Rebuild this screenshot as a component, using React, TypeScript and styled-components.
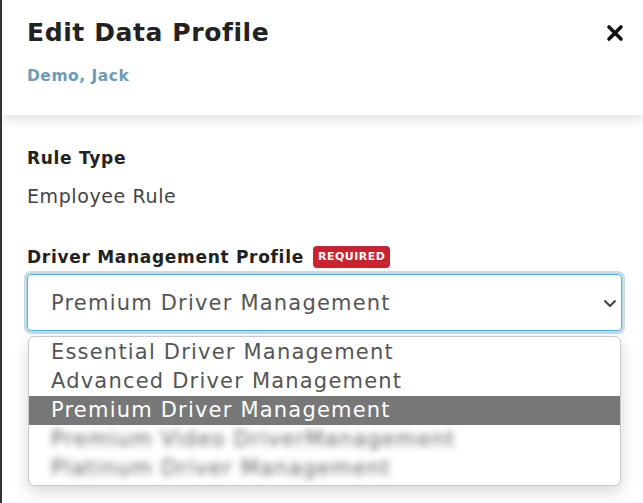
import React from "react";
import styled, { createGlobalStyle } from "styled-components";

const GlobalStyle = createGlobalStyle`
    html, body {
        margin: 0;
        padding: 0;
        background: #ffffff;
    }
    body {
        font-family: "DejaVu Sans", "Liberation Sans", sans-serif;
        color: #333;
    }
`;

const Panel = styled.div`
    min-height: 503px;
    border-left: 2px solid #333;
    background: #fff;
    box-sizing: border-box;
    overflow: hidden;
`;

const Header = styled.header`
    position: relative;
    z-index: 1;
    display: flex;
    justify-content: space-between;
    align-items: flex-start;
    height: 115px;
    padding: 0 19px 0 25px;
    box-sizing: border-box;
    background: #fff;
    box-shadow: 0 5px 10px rgba(0, 0, 0, 0.11);
`;

const TitleBlock = styled.div`
    display: flex;
    flex-direction: column;
    padding-top: 18px;
`;

const Title = styled.h1`
    margin: 0;
    font-size: 25px;
    line-height: 30px;
    font-weight: 700;
    letter-spacing: 0.6px;
    color: #222;
`;

const Subtitle = styled.div`
    margin-top: 19px;
    font-size: 15.5px;
    font-weight: 700;
    letter-spacing: 0.5px;
    color: #6c9db8;
`;

const CloseButton = styled.button`
    margin-top: 24px;
    padding: 0;
    border: 0;
    background: none;
    width: 18px;
    height: 18px;
    cursor: pointer;
    svg {
        display: block;
    }
`;

const Body = styled.div`
    padding: 32px 21px 0 25px;
`;

const Field = styled.div<{ gap?: number }>`
    margin-bottom: ${({ gap }) => gap ?? 0}px;
`;

const Label = styled.div`
    display: flex;
    align-items: center;
    gap: 9px;
    font-size: 17px;
    line-height: 22px;
    font-weight: 700;
    letter-spacing: 0.7px;
    color: #222;
`;

const Value = styled.div`
    margin-top: 15px;
    font-size: 19px;
    line-height: 24px;
    letter-spacing: 0.6px;
    color: #444;
`;

const Badge = styled.span`
    display: inline-flex;
    align-items: center;
    height: 22px;
    padding: 0 5px;
    border-radius: 4px;
    background: #c8232f;
    color: #fff;
    font-size: 11px;
    font-weight: 700;
    letter-spacing: 0.5px;
`;

const SelectWrap = styled.div`
    position: relative;
    margin-top: 6px;
`;

const SelectBox = styled.div`
    display: flex;
    align-items: center;
    justify-content: space-between;
    height: 57px;
    padding: 0 3px 0 23px;
    box-sizing: border-box;
    border: 1px solid #4db2e0;
    border-radius: 4px;
    box-shadow: 0 0 0 3px #c6dce6;
    font-size: 21px;
    letter-spacing: 1.2px;
    color: #555;
`;

const Menu = styled.ul`
    position: absolute;
    top: 62px;
    left: 1px;
    right: 1px;
    margin: 0;
    padding: 1px 0 2px;
    list-style: none;
    background: #fff;
    border: 1px solid #c9c9c9;
    border-radius: 6px;
    box-shadow: 0 6px 16px rgba(0, 0, 0, 0.16);
    overflow: hidden;
`;

const Option = styled.li<{ selected?: boolean; blurred?: boolean }>`
    height: 29px;
    line-height: 29px;
    padding-left: 22px;
    font-size: 21px;
    letter-spacing: 1.2px;
    white-space: nowrap;
    color: ${({ selected, blurred }) => (selected ? "#fff" : blurred ? "#2a2a2a" : "#555")};
    background: ${({ selected }) => (selected ? "#777" : "transparent")};
    filter: ${({ blurred }) => (blurred ? "blur(3.5px)" : "none")};
    opacity: ${({ blurred }) => (blurred ? 0.75 : 1)};
`;

const options = [
    { label: "Essential Driver Management" },
    { label: "Advanced Driver Management" },
    { label: "Premium Driver Management", selected: true },
    { label: "Premium Video DriverManagement", blurred: true },
    { label: "Platinum Driver Management", blurred: true },
];

const App: React.FC = () => {
    return (
        <>
            <GlobalStyle />
            <Panel>
                <Header>
                    <TitleBlock>
                        <Title>Edit Data Profile</Title>
                        <Subtitle>Demo, Jack</Subtitle>
                    </TitleBlock>
                    <CloseButton aria-label="Close">
                        <svg width="18" height="18" viewBox="0 0 18 18">
                            <path d="M3 3 L15 15 M15 3 L3 15" stroke="#111" strokeWidth="3.6" strokeLinecap="round" />
                        </svg>
                    </CloseButton>
                </Header>

                <Body>
                    <Field gap={38}>
                        <Label>Rule Type</Label>
                        <Value>Employee Rule</Value>
                    </Field>

                    <Field>
                        <Label>
                            Driver Management Profile
                            <Badge>REQUIRED</Badge>
                        </Label>
                        <SelectWrap>
                            <SelectBox>
                                <span>Premium Driver Management</span>
                                <svg width="16" height="12" viewBox="0 0 16 12">
                                    <path d="M2.5 3.5 L8 9 L13.5 3.5" fill="none" stroke="#444" strokeWidth="2" />
                                </svg>
                            </SelectBox>
                            <Menu>
                                {options.map((o) => (
                                    <Option key={o.label} selected={o.selected} blurred={o.blurred}>
                                        {o.label}
                                    </Option>
                                ))}
                            </Menu>
                        </SelectWrap>
                    </Field>
                </Body>
            </Panel>
        </>
    );
};

export default App;
